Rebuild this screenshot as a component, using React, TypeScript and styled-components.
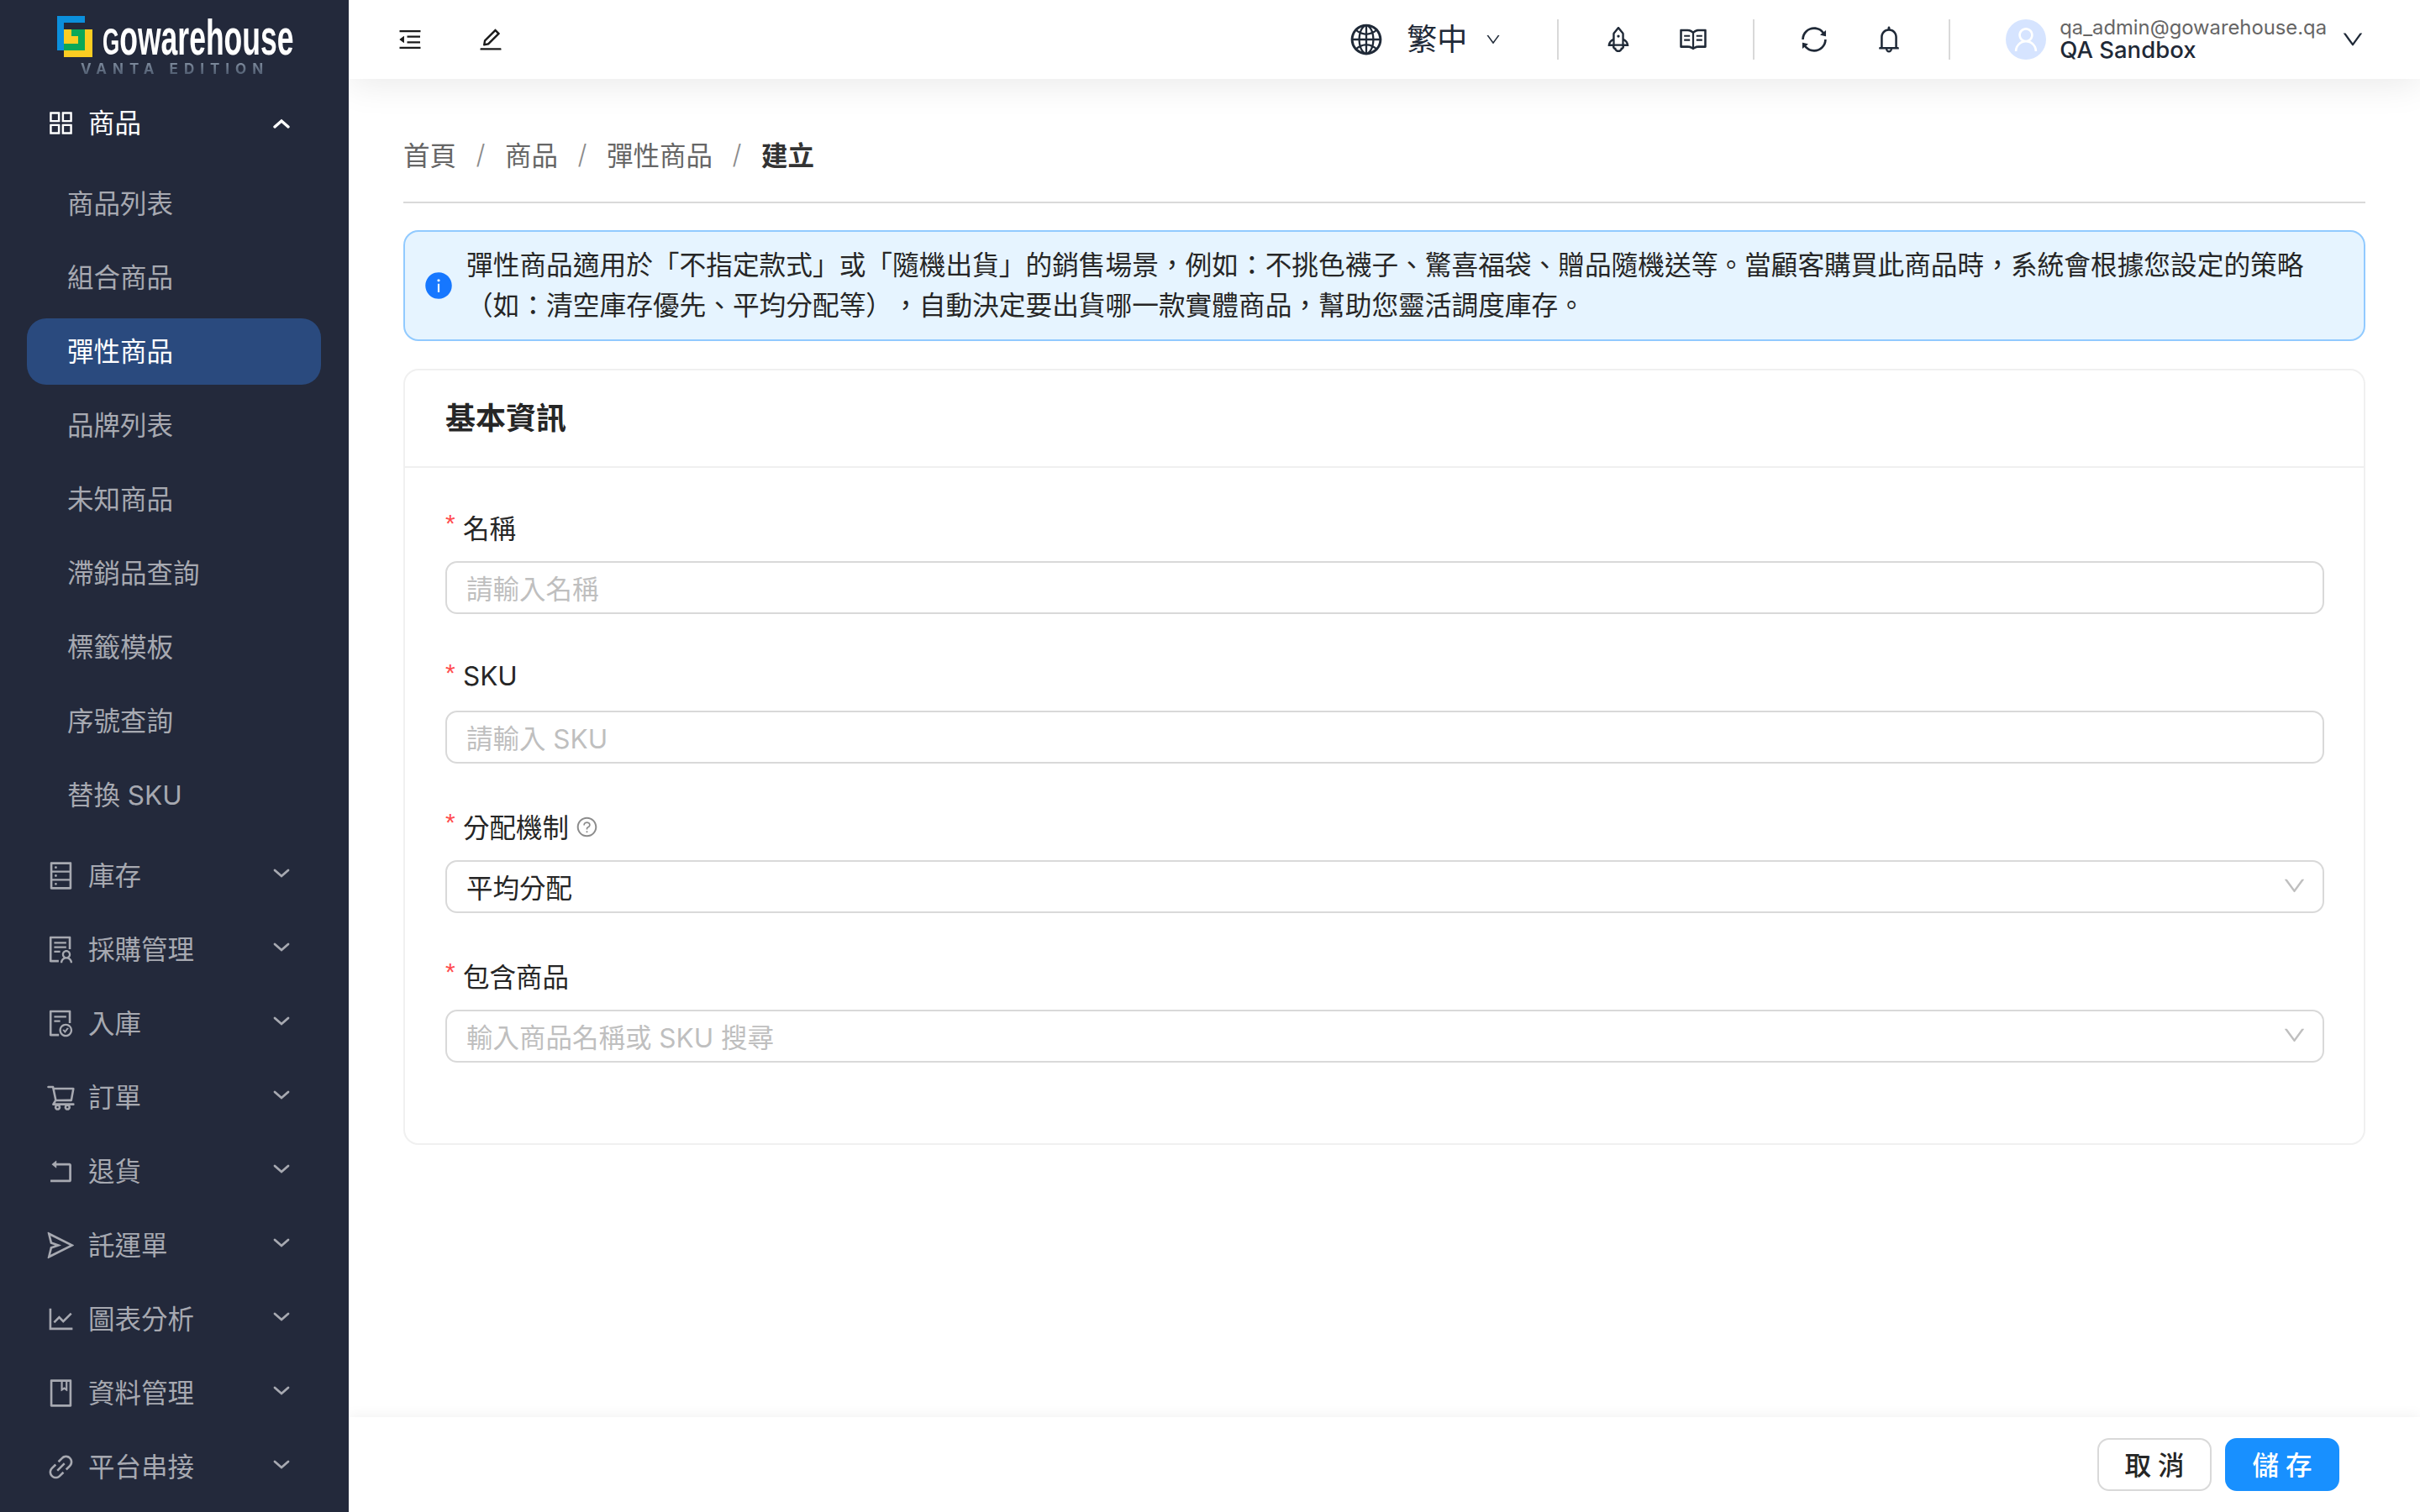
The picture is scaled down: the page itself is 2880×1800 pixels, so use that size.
import React from 'react';
import styled, { createGlobalStyle } from 'styled-components';
import {
  AiOutlineAppstore,
  AiOutlineDatabase,
  AiOutlineSolution,
  AiOutlineFileDone,
  AiOutlineShoppingCart,
  AiOutlineRollback,
  AiOutlineSend,
  AiOutlineLineChart,
  AiOutlineBook,
  AiOutlineLink,
  AiOutlineMenuFold,
  AiOutlineEdit,
  AiOutlineGlobal,
  AiOutlineRocket,
  AiOutlineRead,
  AiOutlineSync,
  AiOutlineBell,
  AiOutlineUser,
  AiOutlineDown,
  AiOutlineQuestionCircle,
  AiFillInfoCircle,
} from 'react-icons/ai';

const GlobalStyle = createGlobalStyle`
  html, body {
    margin: 0;
    padding: 0;
    background: #fff;
    font-family: Inter, "Noto Sans CJK TC", sans-serif;
    text-spacing-trim: space-all;
  }
  * {
    box-sizing: border-box;
  }
`;

const Page = styled.div`
  display: flex;
  width: 2880px;
  height: 1800px;
  overflow: hidden;
  background: #fff;
`;

const Sidebar = styled.aside`
  flex: 0 0 415px;
  height: 1800px;
  overflow: hidden;
  background: #23293b;
  z-index: 3;
`;

const LogoWrap = styled.div`
  display: flex;
  flex-direction: column;
  height: 107px;
  padding: 19px 0 0 68px;
`;

const LogoRow = styled.div`
  display: flex;
  height: 49px;
`;

const LogoMark = styled.svg`
  flex: 0 0 auto;
  width: 42px;
  height: 49px;
`;

const LogoText = styled.div`
  margin: 1px 0 0 12px;
  color: #fff;
  font-family: 'Liberation Sans', sans-serif;
  font-size: 60px;
  font-weight: 700;
  line-height: 49px;
  transform: scaleX(0.592);
  transform-origin: left center;
  white-space: nowrap;
`;

const LogoCap = styled.span`
  font-size: 44px;
`;

const Edition = styled.div`
  margin: 7px 0 0 28px;
  font-family: Inter, sans-serif;
  font-size: 17px;
  font-weight: 700;
  line-height: 14px;
  letter-spacing: 7px;
  white-space: nowrap;
  color: transparent;
  background: linear-gradient(#7d8a9c, #4f5c70);
  -webkit-background-clip: text;
  background-clip: text;
`;

const MenuRow = styled.div<{ $open?: boolean }>`
  display: flex;
  align-items: center;
  height: 79px;
  margin-bottom: 9px;
  padding: 0 70px 0 54px;
  color: ${({ $open }) => ($open ? '#fff' : '#a7a9b1')};
  font-size: 31.5px;
  line-height: 79px;
`;

const MenuIcon = styled.span`
  display: flex;
  flex: 0 0 37px;
  justify-content: center;
  margin-right: 14px;
  font-size: 37px;
`;

const MenuLabel = styled.span`
  flex: 1;
  white-space: nowrap;
`;

const SubMenu = styled.div`
  margin: 17px 0 17px;
`;

const SubItem = styled.div<{ $active?: boolean }>`
  height: 79px;
  margin: 0 33px 9px 32px;
  padding-left: 48px;
  border-radius: 23px;
  background: ${({ $active }) => ($active ? '#2a4a7e' : 'transparent')};
  color: ${({ $active }) => ($active ? '#fff' : '#a7a9b1')};
  font-size: 31.5px;
  line-height: 79px;
  white-space: nowrap;
`;

const ArrowSvg = styled.svg<{ $up?: boolean }>`
  width: 20px;
  height: 12px;
  margin-bottom: ${({ $up }) => ($up ? '0' : '5px')};
  transform: ${({ $up }) => ($up ? 'none' : 'rotate(180deg)')};
`;

const Main = styled.main`
  display: flex;
  flex: 1;
  flex-direction: column;
  min-width: 0;
  height: 1800px;
`;

const Header = styled.header`
  display: flex;
  flex: 0 0 94px;
  align-items: center;
  padding: 0 65px 0 57px;
  background: #fff;
  box-shadow: 0 6px 44px rgba(0, 0, 0, 0.09);
  color: #1f2937;
  z-index: 2;
`;

const HeaderLeft = styled.div`
  display: flex;
  align-items: center;
  gap: 64px;
  color: #1a1a1a;
`;

const HeaderRight = styled.div`
  display: flex;
  align-items: center;
  margin-left: auto;
`;

const HeadIcon = styled.span`
  display: flex;
  align-items: center;
  justify-content: center;
  width: 32px;
  font-size: 34px;
`;

const Lang = styled.div`
  display: flex;
  align-items: center;
  padding-right: 66px;
  font-size: 36px;
  line-height: 48px;
`;

const Globe = styled.span`
  display: flex;
  margin-right: 27px;
  font-size: 42px;
`;

const LangCaret = styled.span`
  display: flex;
  margin-left: 21px;
  font-size: 20px;
`;

const VLine = styled.div`
  width: 2px;
  height: 48px;
  background: #d9d9d9;
`;

const Tools = styled.div`
  display: flex;
  align-items: center;
  gap: 53px;
  padding: 0 53px;
`;

const ToolIcon = styled.span`
  display: flex;
  align-items: center;
  justify-content: center;
  width: 36px;
  font-size: 42px;
`;

const Avatar = styled.div`
  display: flex;
  align-items: center;
  justify-content: center;
  width: 48px;
  height: 48px;
  margin: 0 16px 0 66px;
  border-radius: 50%;
  background: #d6e4ff;
  color: #fff;
  font-size: 36px;
`;

const UserInfo = styled.div`
  display: flex;
  flex-direction: column;
`;

const UserMail = styled.div`
  color: #666;
  font-size: 23.8px;
  line-height: 25px;
`;

const UserName = styled.div`
  color: #1f2937;
  font-size: 27.5px;
  font-weight: 500;
  line-height: 29px;
`;

const UserCaret = styled.span`
  display: flex;
  margin-left: 16px;
  font-size: 30px;
`;

const Content = styled.div`
  flex: 1;
  min-height: 0;
  padding: 65px 65px 0 65px;
`;

const Crumbs = styled.nav`
  display: flex;
  align-items: center;
  height: 48px;
  margin-bottom: 33px;
  color: #666;
  font-size: 31.5px;
`;

const CrumbSep = styled.span`
  display: flex;
  justify-content: center;
  width: 58px;
  color: #8c8c8c;
  font-weight: 300;
`;

const CrumbNow = styled.span`
  color: #333;
  font-weight: 700;
`;

const Rule = styled.div`
  height: 2px;
  margin-bottom: 32px;
  background: #d9d9d9;
`;

const Alert = styled.div`
  display: flex;
  align-items: center;
  height: 132px;
  padding: 0 60px 0 22px;
  border: 2px solid #91caff;
  border-radius: 18px;
  background: #e6f4ff;
  color: #262626;
  font-size: 31.7px;
  line-height: 48px;
`;

const AlertIcon = styled.span`
  display: flex;
  flex: 0 0 auto;
  margin-right: 15px;
  color: #1677ff;
  font-size: 36px;
`;

const Card = styled.section`
  margin-top: 33px;
  border: 2px solid #f0f0f0;
  border-radius: 18px;
  background: #fff;
`;

const CardHead = styled.div`
  height: 116px;
  padding-left: 48px;
  border-bottom: 2px solid #f0f0f0;
  color: #262626;
  font-size: 36px;
  font-weight: 700;
  line-height: 114px;
`;

const CardBody = styled.div`
  padding: 51px 47px 41px 48px;
`;

const Field = styled.div`
  margin-bottom: 55px;
`;

const FieldLabel = styled.label`
  display: flex;
  align-items: center;
  height: 40px;
  margin-bottom: 20px;
  padding-bottom: 3px;
  color: #262626;
  font-size: 31.5px;
`;

const Star = styled.span`
  align-self: flex-start;
  width: 21px;
  margin-top: 1px;
  color: #ff4d4f;
  font-family: 'Liberation Sans', sans-serif;
  font-size: 30px;
  line-height: 28px;
`;

const Hint = styled.span`
  display: flex;
  margin: 4px 0 0 8px;
  color: #8c8c8c;
  font-size: 27px;
`;

const Control = styled.div<{ $empty?: boolean }>`
  display: flex;
  align-items: center;
  justify-content: space-between;
  height: 63px;
  padding: 0 18px 2px 23px;
  border: 2px solid #d9d9d9;
  border-radius: 14px;
  background: #fff;
  color: ${({ $empty }) => ($empty ? '#bfbfbf' : '#262626')};
  font-size: 31.5px;
`;

const ControlCaret = styled.span`
  display: flex;
  color: #bfbfbf;
  font-size: 31px;
`;

const Footer = styled.footer`
  display: flex;
  flex: 0 0 113px;
  justify-content: flex-end;
  gap: 16px;
  padding: 25px 96px 0 0;
  background: #fff;
  box-shadow: 0 -3px 14px rgba(0, 0, 0, 0.05);
  z-index: 2;
`;

const Button = styled.button<{ $primary?: boolean }>`
  width: 136px;
  height: 63px;
  padding: 0 0 3px;
  border: 2px solid ${({ $primary }) => ($primary ? '#1890ff' : '#d9d9d9')};
  border-radius: 14px;
  background: ${({ $primary }) => ($primary ? '#1890ff' : '#fff')};
  color: ${({ $primary }) => ($primary ? '#fff' : '#262626')};
  font-family: inherit;
  font-size: 31.5px;
  font-weight: 500;
  letter-spacing: 8px;
  text-indent: 8px;
`;

const subItems = ['商品列表', '組合商品', '彈性商品', '品牌列表', '未知商品', '滯銷品查詢', '標籤模板', '序號查詢', '替換 SKU'];

const menus = [
  { label: '庫存', icon: <AiOutlineDatabase /> },
  { label: '採購管理', icon: <AiOutlineSolution /> },
  { label: '入庫', icon: <AiOutlineFileDone /> },
  { label: '訂單', icon: <AiOutlineShoppingCart /> },
  { label: '退貨', icon: <AiOutlineRollback /> },
  { label: '託運單', icon: <AiOutlineSend /> },
  { label: '圖表分析', icon: <AiOutlineLineChart /> },
  { label: '資料管理', icon: <AiOutlineBook /> },
  { label: '平台串接', icon: <AiOutlineLink /> },
];

function Arrow({ up }: { up?: boolean }) {
  return (
    <ArrowSvg $up={up} viewBox="0 0 20 12" fill="none" stroke="currentColor" strokeWidth={up ? 3.4 : 2.8} strokeLinecap="round">
      <path d="M2 10 L10 3 L18 10" />
    </ArrowSvg>
  );
}

function Logo() {
  return (
    <LogoWrap>
      <LogoRow>
        <LogoMark viewBox="0 0 42 49">
          <path d="M0 0H33V8H8V41H0Z" fill="#0b8fdc" />
          <path d="M8 16H42V49H8V41H33V16H8Z" fill="#fbcd22" />
          <path d="M8 16H33V41H8V33H25V24H17V16H8Z" fill="#0aa858" />
          <path d="M8 16H17V24H25V33H8Z" fill="#fbcd22" />
        </LogoMark>
        <LogoText>
          <LogoCap>G</LogoCap>owarehouse
        </LogoText>
      </LogoRow>
      <Edition>VANTA EDITION</Edition>
    </LogoWrap>
  );
}

function Item({ label, children, required = true }: { label: React.ReactNode; children: React.ReactNode; required?: boolean }) {
  return (
    <Field>
      <FieldLabel>
        {required && <Star>*</Star>}
        {label}
      </FieldLabel>
      {children}
    </Field>
  );
}

export default function App() {
  return (
    <Page>
      <GlobalStyle />
      <Sidebar>
        <Logo />
        <MenuRow $open>
          <MenuIcon>
            <AiOutlineAppstore />
          </MenuIcon>
          <MenuLabel>商品</MenuLabel>
          <Arrow up />
        </MenuRow>
        <SubMenu>
          {subItems.map((name) => (
            <SubItem key={name} $active={name === '彈性商品'}>
              {name}
            </SubItem>
          ))}
        </SubMenu>
        {menus.map((m) => (
          <MenuRow key={m.label}>
            <MenuIcon>{m.icon}</MenuIcon>
            <MenuLabel>{m.label}</MenuLabel>
            <Arrow />
          </MenuRow>
        ))}
      </Sidebar>
      <Main>
        <Header>
          <HeaderLeft>
            <HeadIcon>
              <AiOutlineMenuFold />
            </HeadIcon>
            <HeadIcon>
              <AiOutlineEdit />
            </HeadIcon>
          </HeaderLeft>
          <HeaderRight>
            <Lang>
              <Globe>
                <AiOutlineGlobal />
              </Globe>
              繁中
              <LangCaret>
                <AiOutlineDown />
              </LangCaret>
            </Lang>
            <VLine />
            <Tools>
              <ToolIcon>
                <AiOutlineRocket />
              </ToolIcon>
              <ToolIcon>
                <AiOutlineRead />
              </ToolIcon>
            </Tools>
            <VLine />
            <Tools>
              <ToolIcon>
                <AiOutlineSync />
              </ToolIcon>
              <ToolIcon>
                <AiOutlineBell />
              </ToolIcon>
            </Tools>
            <VLine />
            <Avatar>
              <AiOutlineUser />
            </Avatar>
            <UserInfo>
              <UserMail>qa_admin@gowarehouse.qa</UserMail>
              <UserName>QA Sandbox</UserName>
            </UserInfo>
            <UserCaret>
              <AiOutlineDown />
            </UserCaret>
          </HeaderRight>
        </Header>
        <Content>
          <Crumbs>
            首頁
            <CrumbSep>/</CrumbSep>
            商品
            <CrumbSep>/</CrumbSep>
            彈性商品
            <CrumbSep>/</CrumbSep>
            <CrumbNow>建立</CrumbNow>
          </Crumbs>
          <Rule />
          <Alert>
            <AlertIcon>
              <AiFillInfoCircle />
            </AlertIcon>
            <div>
              彈性商品適用於「不指定款式」或「隨機出貨」的銷售場景，例如：不挑色襪子、驚喜福袋、贈品隨機送等。當顧客購買此商品時，系統會根據您設定的策略（如：清空庫存優先、平均分配等），自動決定要出貨哪一款實體商品，幫助您靈活調度庫存。
            </div>
          </Alert>
          <Card>
            <CardHead>基本資訊</CardHead>
            <CardBody>
              <Item label="名稱">
                <Control $empty>請輸入名稱</Control>
              </Item>
              <Item label="SKU">
                <Control $empty>請輸入 SKU</Control>
              </Item>
              <Item
                label={
                  <>
                    分配機制
                    <Hint>
                      <AiOutlineQuestionCircle />
                    </Hint>
                  </>
                }
              >
                <Control>
                  平均分配
                  <ControlCaret>
                    <AiOutlineDown />
                  </ControlCaret>
                </Control>
              </Item>
              <Item label="包含商品">
                <Control $empty>
                  輸入商品名稱或 SKU 搜尋
                  <ControlCaret>
                    <AiOutlineDown />
                  </ControlCaret>
                </Control>
              </Item>
            </CardBody>
          </Card>
        </Content>
        <Footer>
          <Button>取消</Button>
          <Button $primary>儲存</Button>
        </Footer>
      </Main>
    </Page>
  );
}
